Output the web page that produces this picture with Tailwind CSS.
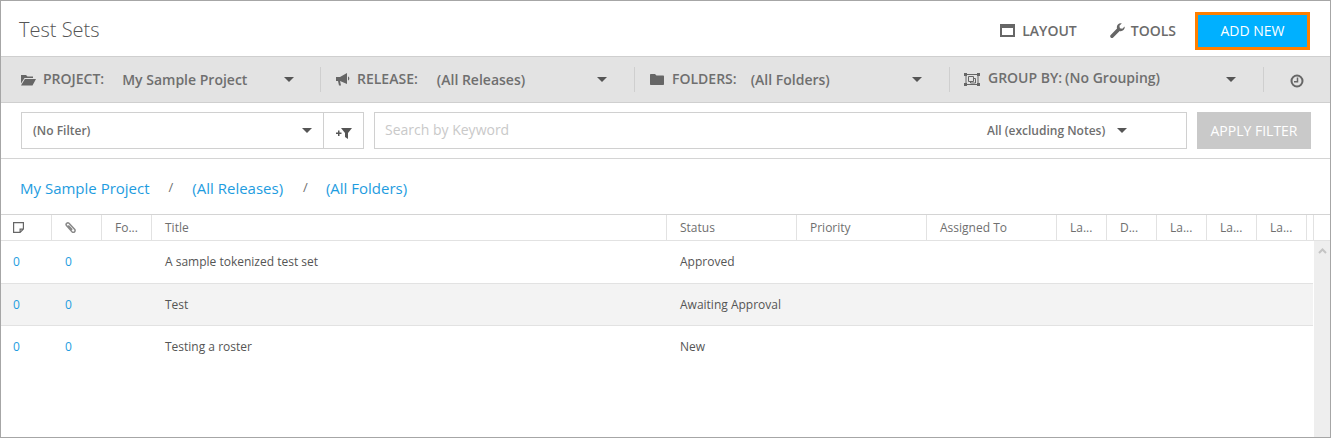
<!DOCTYPE html>
<html lang="en">
<head>
  <meta charset="UTF-8">
  <title>Test Sets</title>
  <script src="https://cdn.jsdelivr.net/npm/@tailwindcss/browser@4"></script>
</head>
<body class="bg-white">
  <div class="w-[1331px] h-[438px] overflow-hidden border border-[#a6a6a6] font-['Open_Sans',sans-serif] text-[#6b6b6b]">

    <!-- Title bar -->
    <header class="h-[55px] flex items-center pl-[18px] pr-[20px] pt-[4px]">
      <h1 class="text-[20px] font-light text-[#555] flex-1 -mt-[2px]">Test Sets</h1>
      <button class="flex items-center gap-[7px] text-[14px] font-semibold text-[#6b6b6b] mr-[33px]">
        <svg width="15" height="13" viewBox="0 0 15 13"><path fill="#666" fill-rule="evenodd" d="M0 0h15v13H0zM2 4v7h11V4z"/></svg>
        LAYOUT
      </button>
      <button class="flex items-center gap-[6px] text-[14px] font-semibold text-[#6b6b6b] mr-[19px]">
        <svg width="15" height="15" viewBox="0 0 15 15"><path fill="#666" d="M14.6 3.4c.3 1.4-.1 2.8-1.1 3.7-1 1-2.5 1.3-3.8.9l-6.5 6.4c-.7.7-1.8.7-2.5 0s-.7-1.8 0-2.5L7 5.4C6.6 4 6.9 2.500 7.900 1.500 8.900.5 10.300.1 11.700.4L9.400 2.700l.5 2.500 2.400.5z"/></svg>
        TOOLS
      </button>
      <button class="w-[115px] h-[38px] bg-[#00b0ff] border-[3px] border-[#ff7f00] text-white text-[14px]">ADD NEW</button>
    </header>

    <!-- Project toolbar -->
    <div class="h-[47px] bg-[#e3e3e3] border-y border-[#cfcfcf] flex items-center text-[14px] font-semibold text-[#6f6f6f]">
      <div class="w-[320px] h-[25px] flex items-center pl-[20px] border-r border-[#cfcfcf]">
        <svg width="15" height="12" viewBox="0 0 15 12"><path fill="#666" d="M0 1h5l1.500 1.500H12V4H3.500L0 9.500zM3.900 5H15l-3.500 6.500H0z"/></svg>
        <span class="ml-[7px] -mt-[2px]">PROJECT:</span>
        <span class="ml-[18px] w-[162px]">My Sample Project</span>
        <span class="w-0 h-0 border-x-[5px] border-x-transparent border-t-[5px] border-t-[#555]"></span>
      </div>
      <div class="w-[314px] h-[25px] flex items-center pl-[15px] border-r border-[#cfcfcf]">
        <svg width="15" height="13" viewBox="0 0 15 13"><path fill="#666" d="M0 4h4l7-4v11L4 8l1 4.500H3L2 8H0zM12 3.500c1.800.5 1.800 3.500 0 4z"/></svg>
        <span class="ml-[6px] -mt-[2px]">RELEASE:</span>
        <span class="ml-[19px] w-[160px]">(All Releases)</span>
        <span class="w-0 h-0 border-x-[5px] border-x-transparent border-t-[5px] border-t-[#555]"></span>
      </div>
      <div class="w-[315px] h-[25px] flex items-center pl-[15px] border-r border-[#cfcfcf]">
        <svg width="14" height="11" viewBox="0 0 14 11"><path fill="#666" d="M1 0h4l1.500 1.500H13c.6 0 1 .4 1 1V10c0 .6-.4 1-1 1H1c-.6 0-1-.4-1-1V1c0-.6.4-1 1-1z"/></svg>
        <span class="ml-[8px] -mt-[2px]">FOLDERS:</span>
        <span class="ml-[14px] w-[161px]">(All Folders)</span>
        <span class="w-0 h-0 border-x-[5px] border-x-transparent border-t-[5px] border-t-[#555]"></span>
      </div>
      <div class="w-[314px] h-[25px] flex items-center pl-[14px] border-r border-[#cfcfcf]">
        <svg width="16" height="15" viewBox="0 0 16 15"><g fill="none" stroke="#666"><path d="M2 2.500h12v10H2z"/><path d="M4.500 4.500h5v5h-5zM6.500 9.500v1.500h5V6.500H9.500"/></g><g fill="#666"><path d="M0 1h3v3H0zM13 1h3v3h-3zM0 11h3v3H0zM13 11h3v3h-3z"/></g></svg>
        <span class="ml-[8px] -mt-[4px]">GROUP BY:</span>
        <span class="ml-[3px] w-[161px] -mt-[4px]">(No Grouping)</span>
        <span class="w-0 h-0 border-x-[5px] border-x-transparent border-t-[5px] border-t-[#555]"></span>
      </div>
      <div class="flex-1 flex justify-center pr-[1px] pt-[2px]">
        <svg width="14" height="14" viewBox="0 0 14 14"><circle cx="7" cy="7" r="5.500" fill="none" stroke="#666" stroke-width="2"/><path fill="none" stroke="#666" stroke-width="1.500" d="M7.500 3.500V7.700H4"/></svg>
      </div>
    </div>

    <!-- Filter row -->
    <div class="h-[56px] flex items-center pl-[20px] pr-[19px] border-b border-[#d4d4d4]">
      <div class="w-[343px] h-[37px] flex border border-[#d0d0d0]">
        <div class="flex-1 flex items-center justify-between pl-[11px] pr-[11px] text-[12px] font-semibold text-[#6f6f6f]">
          <span>(No Filter)</span>
          <span class="w-0 h-0 border-x-[5px] border-x-transparent border-t-[5px] border-t-[#555]"></span>
        </div>
        <div class="w-[40px] border-l border-[#d0d0d0] flex items-center justify-center pt-[5px]">
          <svg width="16" height="11" viewBox="0 0 16 11"><path fill="#555" d="M0 4.500h2v-2h1.500v2h2V6h-2v2H2V6H0zM5 0h11l-4 5v6l-3-2V5z"/></svg>
        </div>
      </div>
      <div class="ml-[10px] w-[813px] h-[37px] flex items-center border border-[#d0d0d0] pl-[10px]">
        <span class="text-[14px] text-[#c9c9c9] w-[602px] -mt-[2px]">Search by Keyword</span>
        <span class="text-[12px] font-semibold text-[#6f6f6f] w-[130px]">All (excluding Notes)</span>
        <span class="w-0 h-0 border-x-[5px] border-x-transparent border-t-[5px] border-t-[#555]"></span>
      </div>
      <button class="ml-[10px] w-[114px] h-[37px] bg-[#c9c9c9] text-white text-[14px]">APPLY FILTER</button>
    </div>

    <!-- Breadcrumb -->
    <nav class="h-[56px] flex items-center pl-[19px] text-[15px] text-[#1e9ce0] border-b border-[#d4d4d4] pt-[3px]">
      <a>My Sample Project</a>
      <span class="mx-[19px] text-[#6f6f6f] text-[13px]">/</span>
      <a>(All Releases)</a>
      <span class="ml-[19px] mr-[18px] pl-px text-[#6f6f6f] text-[13px]">/</span>
      <a>(All Folders)</a>
    </nav>

    <!-- Table header -->
    <div class="h-[26px] grid grid-cols-[51px_50px_50px_515px_130px_130px_130px_50px_50px_50px_50px_50px_7px_1fr] border-b border-[#e2e2e2] text-[12px] text-[#6f6f6f]">
      <div class="border-r border-[#e2e2e2] flex items-center pl-[12px]">
        <svg width="11" height="11" viewBox="0 0 11 11"><path fill="none" stroke="#666" stroke-width="1.200" d="M.6.600h9.800v6.500l-3.300 3.300H.6zM10.400 7.100H7.100v3.300"/></svg>
      </div>
      <div class="border-r border-[#e2e2e2] flex items-center pl-[13px]">
        <svg width="11" height="11" viewBox="0 0 11 11"><path fill="none" stroke="#888" stroke-width="1.500" d="M9.800 7.500L4 1.300C2.500 0 .2 2 1.500 3.600L7.200 10c1.600 1.300 3.600-.8 2.600-2.500zM7.200 7.800L3.300 3.400"/></svg>
      </div>
      <div class="border-r border-[#e2e2e2] flex items-center pl-[13px]">Fo...</div>
      <div class="border-r border-[#e2e2e2] flex items-center pl-[13px]">Title</div>
      <div class="border-r border-[#e2e2e2] flex items-center pl-[13px]">Status</div>
      <div class="border-r border-[#e2e2e2] flex items-center pl-[13px]">Priority</div>
      <div class="border-r border-[#e2e2e2] flex items-center pl-[13px]">Assigned To</div>
      <div class="border-r border-[#e2e2e2] flex items-center pl-[13px]">La...</div>
      <div class="border-r border-[#e2e2e2] flex items-center pl-[13px]">D...</div>
      <div class="border-r border-[#e2e2e2] flex items-center pl-[13px]">La...</div>
      <div class="border-r border-[#e2e2e2] flex items-center pl-[13px]">La...</div>
      <div class="border-r border-[#e2e2e2] flex items-center pl-[13px]">La...</div>
      <div class="border-r border-[#e2e2e2]"></div>
      <div></div>
    </div>

    <!-- Table body -->
    <div class="flex h-[196px]">
      <div class="w-[1312px] text-[12px] text-[#555]">
        <div class="h-[43px] grid grid-cols-[51px_100px_515px_1fr] items-center border-b border-[#e2e2e2]">
          <a class="pl-[12px] text-[#1e9ce0]">0</a>
          <a class="pl-[13px] text-[#1e9ce0]">0</a>
          <span class="pl-[13px]">A sample tokenized test set</span>
          <span class="pl-[13px]">Approved</span>
        </div>
        <div class="h-[42px] grid grid-cols-[51px_100px_515px_1fr] items-center border-b border-[#e2e2e2] bg-[#f3f3f3]">
          <a class="pl-[12px] text-[#1e9ce0]">0</a>
          <a class="pl-[13px] text-[#1e9ce0]">0</a>
          <span class="pl-[13px]">Test</span>
          <span class="pl-[13px]">Awaiting Approval</span>
        </div>
        <div class="h-[42px] grid grid-cols-[51px_100px_515px_1fr] items-center">
          <a class="pl-[12px] text-[#1e9ce0]">0</a>
          <a class="pl-[13px] text-[#1e9ce0]">0</a>
          <span class="pl-[13px]">Testing a roster</span>
          <span class="pl-[13px]">New</span>
        </div>
      </div>
      <div class="w-[16px] ml-px bg-[#eeeeee] flex justify-center pt-[7px]">
        <svg width="9" height="6" viewBox="0 0 9 6"><path fill="none" stroke="#c4c4c4" stroke-width="2" d="M1 5l3.500-3.500L8 5"/></svg>
      </div>
    </div>
  </div>
</body>
</html>
